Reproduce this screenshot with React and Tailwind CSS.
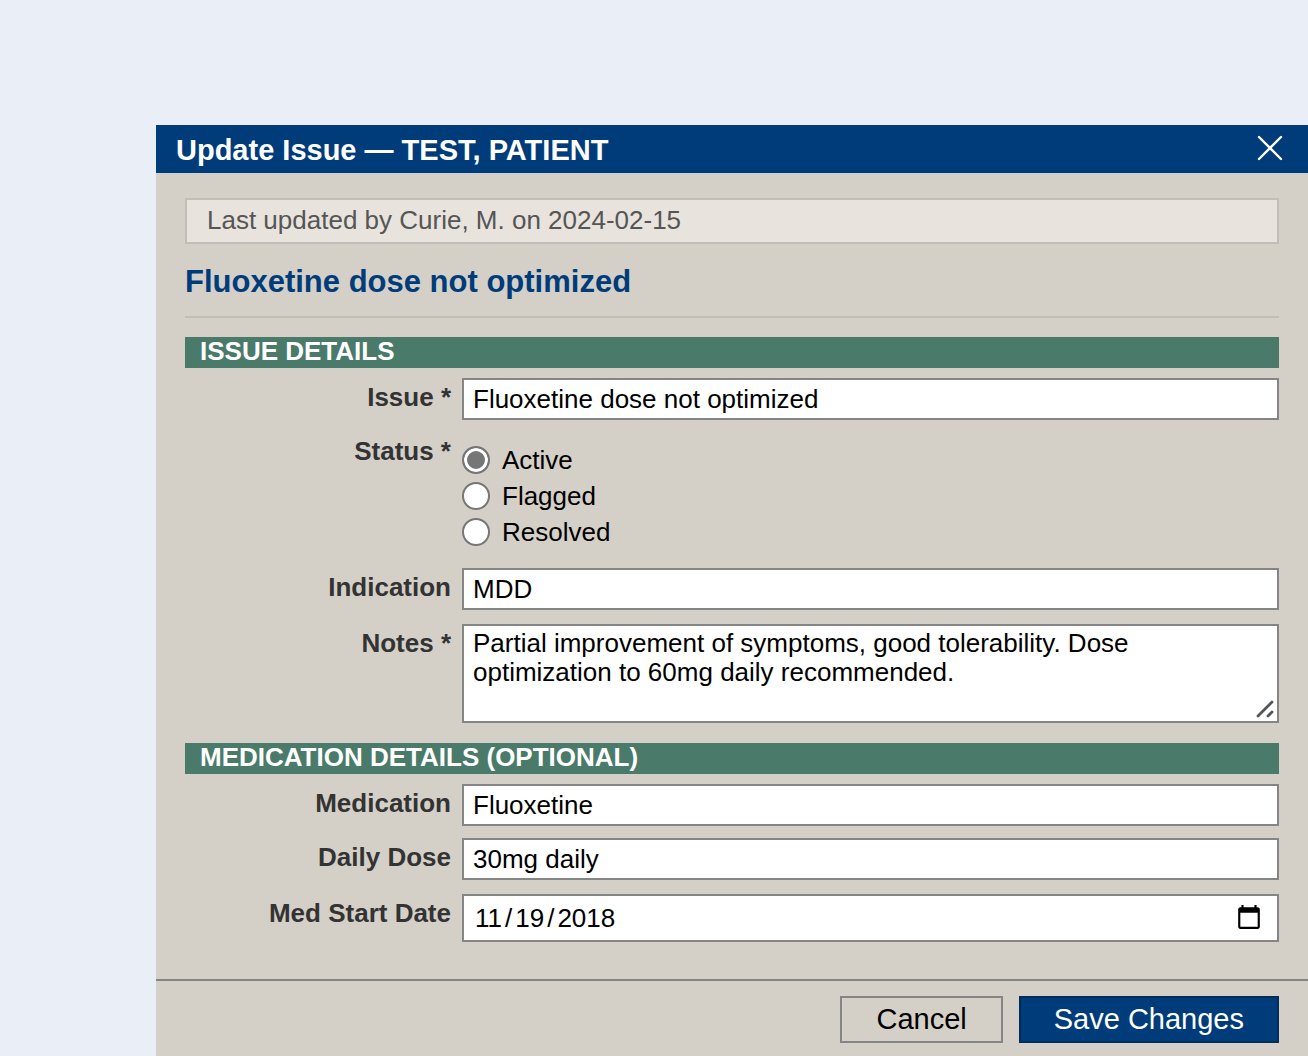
import React, { useState } from 'react';

const STATUSES = ['Active', 'Flagged', 'Resolved'];

const fieldClass = 'block w-full h-[42px] px-[9px] pt-px bg-white border-2 border-[#858585] text-[26px] leading-[29px] text-black';

function SectionHeading({ children }) {
  return (
    <h3 className="h-[31px] px-[15px] bg-[#4a7a69] text-white text-[26px] leading-[29px] font-bold uppercase">
      {children}
    </h3>
  );
}

function Row({ label, htmlFor, children }) {
  return (
    <div className="flex items-start gap-[11px]">
      <label htmlFor={htmlFor} className="w-[266px] shrink-0 pt-1 text-right text-[26px] leading-[30px] font-bold text-[#333333]">
        {label}
      </label>
      <div className="flex-1 min-w-0">{children}</div>
    </div>
  );
}

export default function App() {
  const [issue, setIssue] = useState('Fluoxetine dose not optimized');
  const [status, setStatus] = useState('Active');
  const [indication, setIndication] = useState('MDD');
  const [notes, setNotes] = useState('Partial improvement of symptoms, good tolerability. Dose optimization to 60mg daily recommended.');
  const [medication, setMedication] = useState('Fluoxetine');
  const [dose, setDose] = useState('30mg daily');
  const [startDate, setStartDate] = useState('2018-11-19');

  return (
    <div className="min-h-screen flex flex-col bg-[#eaeef7] pt-[125px] pl-[156px] font-['Liberation_Sans',Arial,sans-serif]">
      <form className="flex-1 flex flex-col bg-[#d4d0c8]" onSubmit={(e) => e.preventDefault()}>
        <header className="flex items-center justify-between h-12 pl-5 pr-6 bg-[#003c7a] text-white">
          <h1 className="text-[29px] leading-[48px] pt-px font-bold">Update Issue — TEST, PATIENT</h1>
          <button type="button" aria-label="Close">
            <svg width="28" height="28" viewBox="0 0 28 28" fill="none" stroke="currentColor" strokeWidth="2.4" strokeLinecap="round">
              <path d="M3 2L25 24M25 2L3 24" />
            </svg>
          </button>
        </header>

        <div className="px-[29px] pt-[25px] pb-[37px]">
          <p className="h-[46px] px-5 bg-[#e8e4dd] border-2 border-[#c2beb7] text-[26px] leading-[41px] text-[#555555]">
            Last updated by Curie, M. on 2024-02-15
          </p>

          <h2 className="mt-5 mb-[19px] h-[54px] border-b-2 border-[#c2beb7] text-[31px] leading-[36px] font-bold text-[#003c7a]">
            Fluoxetine dose not optimized
          </h2>

          <SectionHeading>Issue Details</SectionHeading>
          <div className="flex flex-col pt-[10px] pb-5">
            <Row label="Issue *" htmlFor="issue">
              <input id="issue" type="text" value={issue} onChange={(e) => setIssue(e.target.value)} className={fieldClass} />
            </Row>

            <fieldset className="flex items-start gap-[11px] pt-3 pb-[22px]">
              <legend className="float-left w-[266px] shrink-0 pt-1 text-right text-[26px] leading-[30px] font-bold text-[#333333]">
                Status *
              </legend>
              <div className="flex flex-col gap-2 pt-[14px]">
                {STATUSES.map((s) => (
                  <label key={s} className="flex items-center gap-3 h-7 text-[26px] leading-[28px] text-black">
                    <input
                      type="radio"
                      name="status"
                      value={s}
                      checked={status === s}
                      onChange={() => setStatus(s)}
                      className="appearance-none size-7 rounded-full bg-white border-2 border-[#767676] checked:bg-[#767676] checked:shadow-[inset_0_0_0_3px_white]"
                    />
                    {s}
                  </label>
                ))}
              </div>
            </fieldset>

            <Row label="Indication" htmlFor="indication">
              <input id="indication" type="text" value={indication} onChange={(e) => setIndication(e.target.value)} className={fieldClass} />
            </Row>

            <div className="pt-[14px]">
              <Row label="Notes *" htmlFor="notes">
                <div className="relative">
                  <textarea
                    id="notes"
                    value={notes}
                    onChange={(e) => setNotes(e.target.value)}
                    className="block w-full h-[99px] px-[9px] py-[3px] resize-none bg-white border-2 border-[#858585] text-[26px] leading-[29px] text-black"
                  />
                  <svg className="absolute right-1 bottom-1 pointer-events-none" width="20" height="20" viewBox="0 0 20 20" fill="none" stroke="#555555" strokeWidth="2.8" strokeLinecap="round">
                    <path d="M3 17L17 3M13 17L17 13" />
                  </svg>
                </div>
              </Row>
            </div>
          </div>

          <SectionHeading>Medication Details (Optional)</SectionHeading>
          <div className="flex flex-col gap-3 pt-[10px]">
            <Row label="Medication" htmlFor="medication">
              <input id="medication" type="text" value={medication} onChange={(e) => setMedication(e.target.value)} className={fieldClass} />
            </Row>
            <Row label="Daily Dose" htmlFor="dose">
              <input id="dose" type="text" value={dose} onChange={(e) => setDose(e.target.value)} className={fieldClass} />
            </Row>
            <div className="pt-[2px]">
              <Row label="Med Start Date" htmlFor="start-date">
                <input
                  id="start-date"
                  type="date"
                  value={startDate}
                  onChange={(e) => setStartDate(e.target.value)}
                  className="block w-full h-12 pl-[10px] pr-3 bg-white border-2 border-[#858585] text-[26px] leading-[29px] text-black [&::-webkit-datetime-edit-text]:px-[2px] [&::-webkit-calendar-picker-indicator]:size-7"
                />
              </Row>
            </div>
          </div>
        </div>

        <footer className="flex justify-end gap-4 px-[29px] pt-[15px] pb-[13px] border-t-2 border-[#858585]">
          <button type="button" className="h-[47px] px-[34px] border-2 border-[#858585] text-[29px] leading-[43px] text-black">
            Cancel
          </button>
          <button type="submit" className="h-[47px] px-[33px] bg-[#003c7a] border-2 border-[#002d5c] text-[29px] leading-[43px] text-white">
            Save Changes
          </button>
        </footer>
      </form>
    </div>
  );
}
